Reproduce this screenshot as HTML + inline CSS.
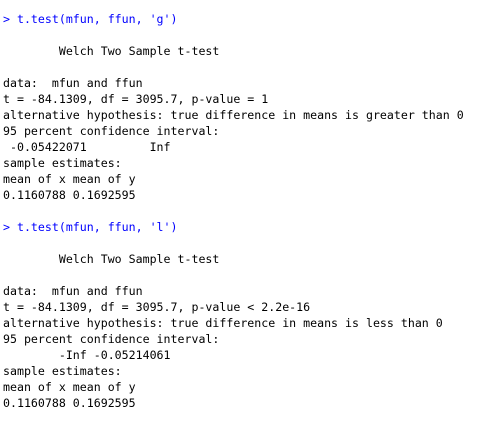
<!DOCTYPE html>
<html><head><meta charset="utf-8"><style>
html,body{margin:0;padding:0;background:#fff;width:477px;height:423px;overflow:hidden}
pre{margin:0;padding:11px 0 0 3px;font-family:"DejaVu Sans Mono","Liberation Mono",monospace;font-size:11.6px;line-height:16px;color:#000}
.p{color:#0000ff}
</style></head><body><pre><span class="p">&gt; t.test(mfun, ffun, 'g')</span>

        Welch Two Sample t-test

data:  mfun and ffun
t = -84.1309, df = 3095.7, p-value = 1
alternative hypothesis: true difference in means is greater than 0
95 percent confidence interval:
 -0.05422071         Inf
sample estimates:
mean of x mean of y 
0.1160788 0.1692595 

<span class="p">&gt; t.test(mfun, ffun, 'l')</span>

        Welch Two Sample t-test

data:  mfun and ffun
t = -84.1309, df = 3095.7, p-value &lt; 2.2e-16
alternative hypothesis: true difference in means is less than 0
95 percent confidence interval:
        -Inf -0.05214061
sample estimates:
mean of x mean of y 
0.1160788 0.1692595 
</pre></body></html>
